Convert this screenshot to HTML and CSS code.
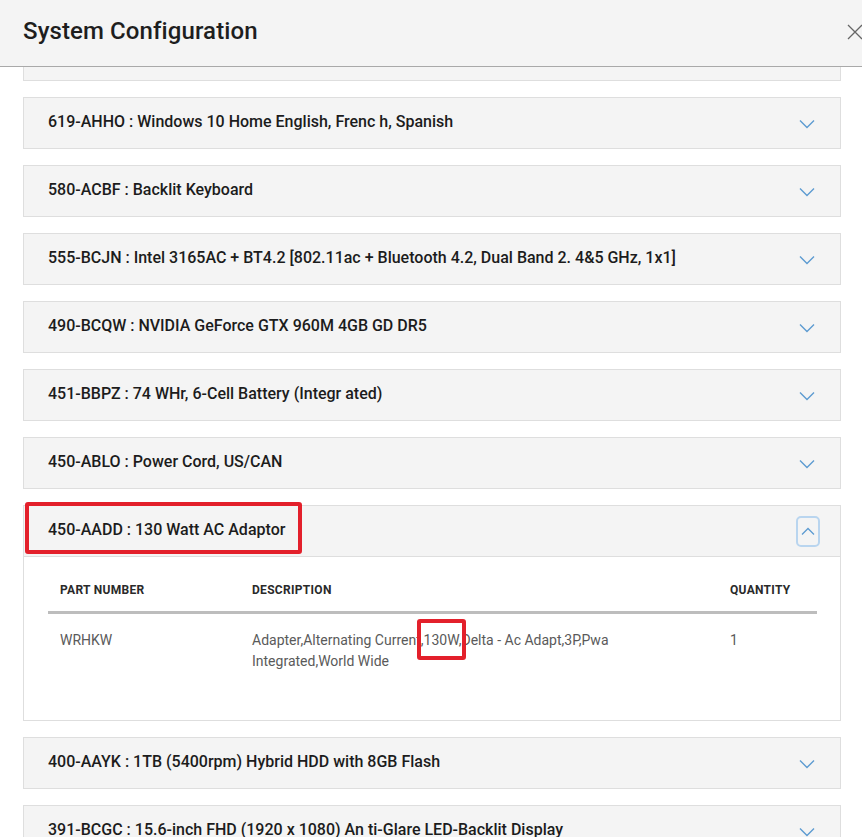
FILE: index.html
```html
<!DOCTYPE html>
<html lang="en">
<head>
    <meta charset="UTF-8">
    <meta name="viewport" content="width=device-width, initial-scale=1.0">
    <title>System Configuration</title>
    <link rel="stylesheet" href="styles.css">
</head>
<body>
    <div class="modal">
        <header class="modal-header">
            <h1>System Configuration</h1>
            <button class="close-btn" aria-label="Close">
                <svg width="16" height="16" viewBox="0 0 16 16"><path d="M1 1 L15 15 M15 1 L1 15" stroke="#666" stroke-width="1.3" fill="none"/></svg>
            </button>
        </header>
        <div class="modal-body">
            <div class="list">
                <div class="panel">
                    <div class="panel-head"><span>&nbsp;</span></div>
                </div>
                <div class="panel">
                    <div class="panel-head">
                        <span>619-AHHO : Windows 10 Home English, Frenc h, Spanish</span>
                        <svg class="chevron" width="16" height="10" viewBox="0 0 16 10"><path d="M1 1.5 L8 8.5 L15 1.5" stroke="#5d9bd1" stroke-width="1.4" fill="none"/></svg>
                    </div>
                </div>
                <div class="panel">
                    <div class="panel-head">
                        <span>580-ACBF : Backlit Keyboard</span>
                        <svg class="chevron" width="16" height="10" viewBox="0 0 16 10"><path d="M1 1.5 L8 8.5 L15 1.5" stroke="#5d9bd1" stroke-width="1.4" fill="none"/></svg>
                    </div>
                </div>
                <div class="panel">
                    <div class="panel-head">
                        <span>555-BCJN : Intel 3165AC + BT4.2 [802.11ac + Bluetooth 4.2, Dual Band 2. 4&amp;5 GHz, 1x1]</span>
                        <svg class="chevron" width="16" height="10" viewBox="0 0 16 10"><path d="M1 1.5 L8 8.5 L15 1.5" stroke="#5d9bd1" stroke-width="1.4" fill="none"/></svg>
                    </div>
                </div>
                <div class="panel">
                    <div class="panel-head">
                        <span>490-BCQW : NVIDIA GeForce GTX 960M 4GB GD DR5</span>
                        <svg class="chevron" width="16" height="10" viewBox="0 0 16 10"><path d="M1 1.5 L8 8.5 L15 1.5" stroke="#5d9bd1" stroke-width="1.4" fill="none"/></svg>
                    </div>
                </div>
                <div class="panel">
                    <div class="panel-head">
                        <span>451-BBPZ : 74 WHr, 6-Cell Battery (Integr ated)</span>
                        <svg class="chevron" width="16" height="10" viewBox="0 0 16 10"><path d="M1 1.5 L8 8.5 L15 1.5" stroke="#5d9bd1" stroke-width="1.4" fill="none"/></svg>
                    </div>
                </div>
                <div class="panel">
                    <div class="panel-head">
                        <span>450-ABLO : Power Cord, US/CAN</span>
                        <svg class="chevron" width="16" height="10" viewBox="0 0 16 10"><path d="M1 1.5 L8 8.5 L15 1.5" stroke="#5d9bd1" stroke-width="1.4" fill="none"/></svg>
                    </div>
                </div>
                <div class="panel open">
                    <div class="panel-head">
                        <span>450-AADD : 130 Watt AC Adaptor</span>
                        <span class="toggle-btn">
                            <svg width="14" height="9" viewBox="0 0 14 9"><path d="M1 7.5 L7 1.5 L13 7.5" stroke="#5d9bd1" stroke-width="1.3" fill="none"/></svg>
                        </span>
                        <div class="highlight head-mark"></div>
                    </div>
                    <div class="panel-content">
                        <table class="parts">
                            <thead>
                                <tr>
                                    <th class="col-part">Part Number</th>
                                    <th class="col-desc">Description</th>
                                    <th class="col-qty">Quantity</th>
                                </tr>
                            </thead>
                            <tbody>
                                <tr>
                                    <td>WRHKW</td>
                                    <td><div class="desc">Adapter,Alternating Current<span class="mark">,130W,</span>Delta - Ac Adapt,3P,Pwa Integrated,World Wide</div></td>
                                    <td>1</td>
                                </tr>
                            </tbody>
                        </table>
                    </div>
                </div>
                <div class="panel">
                    <div class="panel-head">
                        <span>400-AAYK : 1TB (5400rpm) Hybrid HDD with 8GB Flash</span>
                        <svg class="chevron" width="16" height="10" viewBox="0 0 16 10"><path d="M1 1.5 L8 8.5 L15 1.5" stroke="#5d9bd1" stroke-width="1.4" fill="none"/></svg>
                    </div>
                </div>
                <div class="panel">
                    <div class="panel-head">
                        <span>391-BCGC : 15.6-inch FHD (1920 x 1080) An ti-Glare LED-Backlit Display</span>
                        <svg class="chevron" width="16" height="10" viewBox="0 0 16 10"><path d="M1 1.5 L8 8.5 L15 1.5" stroke="#5d9bd1" stroke-width="1.4" fill="none"/></svg>
                    </div>
                </div>
            </div>
        </div>
    </div>
</body>
</html>
```

FILE: styles.css
```css
html, body {
    margin: 0;
    padding: 0;
    height: 100%;
    overflow: hidden;
}

body {
    font-family: 'Roboto', 'Liberation Sans', sans-serif;
    background-color: #fff;
    color: #222;
}

.modal {
    display: flex;
    flex-direction: column;
    height: 837px;
    overflow: hidden;
}

.modal-header {
    display: flex;
    align-items: center;
    justify-content: space-between;
    flex-shrink: 0;
    padding: 0 0 4px 23px;
    box-sizing: border-box;
    height: 67px;
    background-color: #f4f4f4;
    border-bottom: 1px solid #a9a9a9;
}

.modal-header h1 {
    margin: 0;
    font-size: 24px;
    font-weight: 500;
    color: #1e1e1e;
    letter-spacing: 0.1px;
}

.close-btn {
    background: none;
    border: none;
    padding: 0;
    margin-right: -15px;
    width: 30px;
    height: 16px;
    display: flex;
    cursor: pointer;
    margin-top: 2px;
}

.modal-body {
    flex: 1;
    overflow: hidden;
}

.list {
    display: flex;
    flex-direction: column;
    gap: 16px;
    margin-top: -38px;
    padding: 0 21px 0 23px;
}

.panel {
    position: relative;
    border: 1px solid #dedede;
    background-color: #fff;
}

.panel-head {
    position: relative;
    display: flex;
    align-items: center;
    justify-content: space-between;
    height: 50px;
    box-sizing: border-box;
    padding: 0 25px 4px 24px;
    background-color: #f4f4f4;
    font-size: 16px;
    font-weight: 500;
    color: #1c1c1c;
}

.chevron {
    margin-top: 6px;
}

.open .panel-head {
    height: 51px;
    border-bottom: 1px solid #dedede;
    padding-right: 20px;
}

.toggle-btn {
    display: flex;
    align-items: center;
    justify-content: center;
    width: 20px;
    height: 27px;
    border: 2px solid #b9d5ef;
    border-radius: 5px;
    margin-top: 4px;
}

.highlight {
    position: absolute;
    border: 4px solid #e3202b;
    border-radius: 3px;
    box-sizing: border-box;
    pointer-events: none;
}

.head-mark {
    left: 1px;
    top: -4px;
    width: 277px;
    height: 52px;
}

.panel-content {
    padding: 21px 23px 32px 24px;
}

.parts {
    width: 769px;
    border-collapse: collapse;
    table-layout: fixed;
}

.parts th {
    text-align: left;
    font-size: 12px;
    font-weight: 700;
    text-transform: uppercase;
    color: #2a2a2a;
    line-height: 24px;
    padding: 0 12px 9px;
    border-bottom: 3px solid #bdbdbd;
    letter-spacing: 0.3px;
}

.parts td {
    vertical-align: top;
    font-size: 14px;
    line-height: 21px;
    color: #5a5a5a;
    padding: 16px 12px;
}

.col-part {
    width: 168px;
}

.col-qty {
    width: 75px;
}

.desc {
    max-width: 380px;
}

.mark {
    position: relative;
}

.mark::after {
    content: '';
    position: absolute;
    left: -4px;
    right: -5px;
    top: -13px;
    bottom: -12px;
    border: 4px solid #e3202b;
    border-radius: 3px;
}
```
